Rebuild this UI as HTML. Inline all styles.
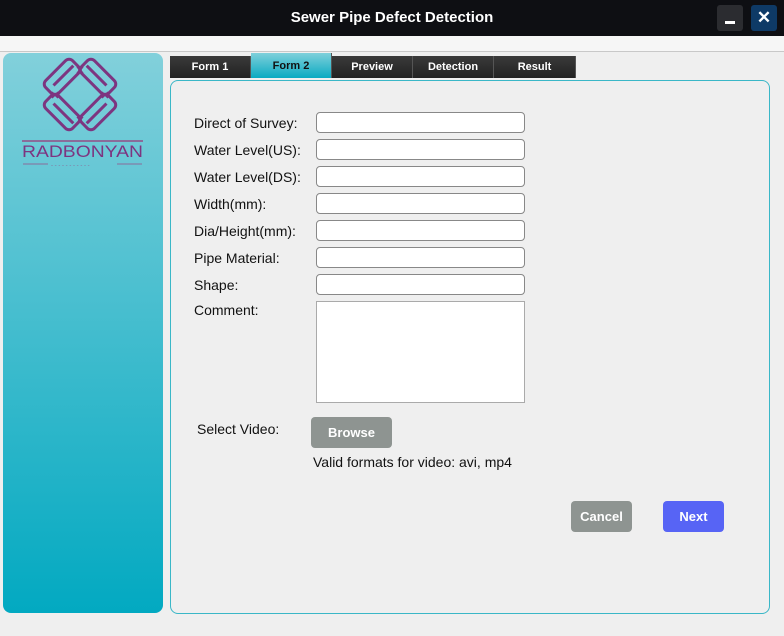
<!DOCTYPE html>
<html><head><style>
*{margin:0;padding:0;box-sizing:border-box}
body{width:784px;height:636px;background:#efefef;font-family:"Liberation Sans",sans-serif;position:relative;overflow:hidden}
.a{position:absolute}
.title{left:0;top:0;width:784px;height:36px;background:#0e0f13;color:#fff;font-weight:bold;font-size:15px;text-align:center;line-height:36px}
.tab{position:absolute;top:56px;height:22px;background:linear-gradient(#3a3a3a,#222);color:#fff;font-weight:bold;font-size:11px;text-align:center;line-height:23px;border-right:1px solid #555}
.lbl{position:absolute;left:194px;font-size:14px;color:#111}
.in{position:absolute;left:316px;width:209px;height:21px;background:#fff;border:1px solid #888;border-radius:4px}
.btn{position:absolute;color:#fff;font-weight:bold;font-size:13px;text-align:center;line-height:31px;border-radius:4px;height:31px}
</style></head><body>
<div class="a title">Sewer Pipe Defect Detection</div>
<div class="a" style="left:717px;top:5px;width:26px;height:26px;background:#2b2c30;border-radius:3px"><div class="a" style="left:8px;top:16px;width:10px;height:3px;background:#fff"></div></div>
<div class="a" style="left:751px;top:5px;width:26px;height:26px;background:#0e3a66;border-radius:3px;color:#fff;font-weight:bold;font-size:17px;text-align:center;line-height:26px">✕</div>
<div class="a" style="left:0;top:36px;width:784px;height:16px;background:#f6f6f6;border-bottom:1px solid #c8c8c8"></div>
<div class="a" style="left:3px;top:53px;width:160px;height:560px;border-radius:8px;background:linear-gradient(#82d0db,#02a9c1)"></div>
<svg class="a" style="left:0;top:53px" width="163" height="120" viewBox="0 53 163 120">
<g fill="none" stroke="#7d3580" stroke-width="3">
<g transform="translate(62,77) rotate(-45)"><rect x="-19" y="-9" width="38" height="18" rx="5"/><line x1="-12" y1="0" x2="16" y2="0"/></g>
<g transform="translate(98,77) rotate(45)"><rect x="-19" y="-9" width="38" height="18" rx="5"/><line x1="-16" y1="0" x2="12" y2="0"/></g>
<g transform="translate(62,112) rotate(45)"><rect x="-19" y="-9" width="38" height="18" rx="5"/><line x1="-12" y1="0" x2="16" y2="0"/></g>
<g transform="translate(98,112) rotate(-45)"><rect x="-19" y="-9" width="38" height="18" rx="5"/><line x1="-16" y1="0" x2="12" y2="0"/></g>
</g>
<g stroke="#7d3580" stroke-width="1.5">
<path d="M77 67 l6 6 M83 67 l-6 6 M52 92 l6 6 M58 92 l-6 6 M102 92 l6 6 M108 92 l-6 6 M77 117 l6 6 M83 117 l-6 6"/>
</g>
<line x1="22" y1="141" x2="143" y2="141" stroke="#8a6c9a" stroke-width="2"/>
<text x="22" y="157" fill="#7d3580" font-size="17" font-family="Liberation Sans" textLength="121" lengthAdjust="spacingAndGlyphs">RADBONYAN</text>
<line x1="23" y1="164" x2="48" y2="164" stroke="#8a6c9a"/><line x1="117" y1="164" x2="142" y2="164" stroke="#8a6c9a"/>
<text x="51" y="167" fill="#8a6c9a" font-size="6" font-family="Liberation Sans">- - - - - - - - - - -</text>
</svg>
<div class="tab" style="left:170px;width:81px">Form 1</div>
<div class="tab" style="left:251px;top:53px;height:25px;width:81px;background:linear-gradient(#7fd0db,#0aaac2);color:#111;line-height:27px">Form 2</div>
<div class="tab" style="left:332px;width:81px">Preview</div>
<div class="tab" style="left:413px;width:81px">Detection</div>
<div class="tab" style="left:494px;width:82px">Result</div>
<div class="a" style="left:170px;top:80px;width:600px;height:534px;border:1px solid #3ab7c7;border-radius:8px"></div>
<div class="lbl" style="top:115px">Direct of Survey:</div><div class="in" style="top:112px"></div>
<div class="lbl" style="top:142px">Water Level(US):</div><div class="in" style="top:139px"></div>
<div class="lbl" style="top:169px">Water Level(DS):</div><div class="in" style="top:166px"></div>
<div class="lbl" style="top:196px">Width(mm):</div><div class="in" style="top:193px"></div>
<div class="lbl" style="top:223px">Dia/Height(mm):</div><div class="in" style="top:220px"></div>
<div class="lbl" style="top:250px">Pipe Material:</div><div class="in" style="top:247px"></div>
<div class="lbl" style="top:277px">Shape:</div><div class="in" style="top:274px"></div>
<div class="lbl" style="top:302px">Comment:</div><div class="in" style="top:301px;height:102px;border-radius:0;border-color:#aaa"></div>
<div class="lbl" style="left:197px;top:421px">Select Video:</div>
<div class="btn" style="left:311px;top:417px;width:81px;background:#8e9491">Browse</div>
<div class="lbl" style="left:313px;top:454px">Valid formats for video: avi, mp4</div>
<div class="btn" style="left:571px;top:501px;width:61px;background:#8e9491">Cancel</div>
<div class="btn" style="left:663px;top:501px;width:61px;background:#5764f5">Next</div>
</body></html>
